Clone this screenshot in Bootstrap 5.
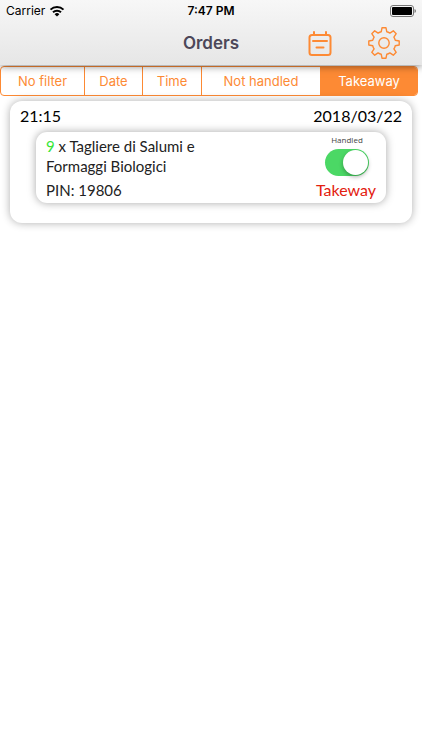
<!DOCTYPE html>
<html lang="en">
<head>
<meta charset="utf-8">
<meta name="viewport" content="width=device-width, initial-scale=1">
<title>Orders</title>
<link href="https://cdn.jsdelivr.net/npm/bootstrap@5.3.0/dist/css/bootstrap.min.css" rel="stylesheet">
<style>
  :root { --orange: #fd8a34; }
  body { font-family: Inter, "Liberation Sans", sans-serif; color: #000; background: #fff; }
  .topbar { background: linear-gradient(#f7f7f7, #e6e6e6); box-shadow: 0 1px 8px rgba(0,0,0,.5); z-index: 2; }
  .statusbar { height: 22px; font-size: 12px; line-height: 22px; padding: 0 6px; }
  .statusbar .clock { font-weight: 600; }
  .titlebar { height: 43px; padding: 0 21px; }
  .titlebar h1 { font-size: 17px; line-height: 43px; font-weight: 600; color: #4c4759; }
  .tool { color: var(--orange); line-height: 0; }
  .tools { gap: 34px; }
  .filters { margin: 1px 4px 0 0; display: grid; grid-template-columns: 83fr 58fr 59fr 119fr 97fr;
    height: 30px; border: 1px solid var(--orange); border-radius: 4px; overflow: hidden; }
  .filters label { --bs-btn-color: var(--orange); --bs-btn-hover-color: var(--orange);
    --bs-btn-active-bg: var(--orange); --bs-btn-active-color: #fff; --bs-btn-active-border-color: var(--orange);
    border: 0; border-radius: 0; padding: 0; font-size: 13px; line-height: 28px; white-space: nowrap; }
  .filters label + input + label { border-left: 1px solid var(--orange); }
  .order, .dish { border: 0; font-family: Lato, "Open Sans", sans-serif; color: #000; }
  .order { margin: 5px 10px 0; padding: 4px 10px 20px; border-radius: 12px; box-shadow: 0 0 8px rgba(0,0,0,.32); }
  .order-head { font-size: 16px; line-height: 22px; margin-bottom: 5px; }
  .dish { margin: 0 16px; padding: 4px 10px 3px; border-radius: 11px; box-shadow: 0 0 9px rgba(0,0,0,.35); color: #222; }
  .dish-name { font-size: 15px; line-height: 20px; max-width: 170px; }
  .qty { color: #37e637; }
  .pin { font-size: 15px; line-height: 20px; }
  .handled { font-family: "Open Sans", sans-serif; font-size: 8px; line-height: 8px; color: #444; width: 58px; }
  .form-check-input.toggle { width: 44px; height: 27px; margin: 5px 0 0; border: 0; border-radius: 14px;
    background: #ddd; display: block; }
  .form-check-input.toggle::before { content: ""; display: block; width: 25px; height: 25px; margin: 1px;
    border-radius: 50%; background: #fff; box-shadow: 0 2px 4px rgba(0,0,0,.3); }
  .form-check-input.toggle:checked { background: #4bd865; }
  .form-check-input.toggle:checked::before { margin-left: 18px; }
  .kind { font-size: 16px; line-height: 20px; color: #e3200f; }
</style>
</head>
<body class="min-vh-100">
<header class="topbar position-relative">
  <div class="statusbar row g-0">
    <div class="col d-flex align-items-center gap-1">
      <span>Carrier</span>
      <svg width="16" height="12" viewBox="0 0 16 12" fill="none" stroke="#000" stroke-width="2" aria-hidden="true">
        <path d="M1.5 4.6a9.3 9.3 0 0 1 13 0M4 7.3a5.7 5.7 0 0 1 8 0"/>
        <path d="M8 11.6 5.6 9.2a3.4 3.4 0 0 1 4.8 0z" fill="#000" stroke="none"/>
      </svg>
    </div>
    <div class="col-auto clock">7:47 PM</div>
    <div class="col d-flex align-items-center justify-content-end">
      <svg width="26" height="12" viewBox="0 0 26 12" aria-hidden="true">
        <rect x=".5" y=".5" width="23" height="11" rx="2.5" fill="#f6f6f6" stroke="#777"/>
        <rect x="2" y="2" width="20" height="8" rx="1" fill="#000"/>
        <path d="M24.5 4v4q1.500-.5 1.500-2t-1.500-2z" fill="#777"/>
      </svg>
    </div>
  </div>
  <div class="titlebar row g-0">
    <div class="col"></div>
    <h1 class="col-auto m-0">Orders</h1>
    <div class="tools col d-flex align-items-center justify-content-end">
      <button type="button" class="tool btn border-0 p-0" aria-label="Calendar">
        <svg width="26" height="26" viewBox="0 0 26 26" fill="none" stroke="currentColor" stroke-width="2" stroke-linecap="round">
          <rect x="2.500" y="4" width="21" height="20" rx="2.500"/>
          <path d="M7 1v3M19 1v3M6 10h14M9.500 16.500h7"/>
        </svg>
      </button>
      <button type="button" class="tool btn border-0 p-0" aria-label="Settings">
        <svg width="34" height="34" viewBox="-17 -16 34 34" fill="none" stroke="currentColor" stroke-width="1.400" stroke-linejoin="round">
          <circle r="5.200"/>
          <path d="M-2-15.200H2L2.800-11.200Q4.300-10.900 5.900-9.900L9.300-12.200 12.200-9.300 9.900-5.900Q10.900-4.300 11.200-2.800L15.200-2V2L11.200 2.800Q10.900 4.300 9.900 5.900L12.200 9.300 9.300 12.200 5.900 9.900Q4.300 10.900 2.800 11.200L2 15.200H-2L-2.800 11.200Q-4.300 10.900-5.900 9.900L-9.300 12.200-12.200 9.300-9.900 5.900Q-10.900 4.300-11.200 2.800L-15.200 2V-2L-11.200-2.800Q-10.900-4.300-9.900-5.900L-12.200-9.300-9.300-12.200-5.900-9.900Q-4.300-10.900-2.800-11.200Z"/>
        </svg>
      </button>
    </div>
  </div>
</header>

<main>
  <div class="filters" role="group" aria-label="Filter orders">
    <input type="radio" class="btn-check" name="filter" id="f-none"><label class="btn" for="f-none">No filter</label>
    <input type="radio" class="btn-check" name="filter" id="f-date"><label class="btn" for="f-date">Date</label>
    <input type="radio" class="btn-check" name="filter" id="f-time"><label class="btn" for="f-time">Time</label>
    <input type="radio" class="btn-check" name="filter" id="f-open"><label class="btn" for="f-open">Not handled</label>
    <input type="radio" class="btn-check" name="filter" id="f-take" checked><label class="btn" for="f-take">Takeaway</label>
  </div>

  <article class="order card">
    <div class="order-head d-flex justify-content-between">
      <span>21:15</span><span>2018/03/22</span>
    </div>
    <div class="dish card">
      <div class="d-flex justify-content-between">
        <div class="dish-name"><span class="qty">9</span> x Tagliere di Salumi e Formaggi Biologici</div>
        <div class="handled d-flex flex-column align-items-center">
          <label for="handled">Handled</label>
          <input class="form-check-input toggle" type="checkbox" role="switch" id="handled" checked>
        </div>
      </div>
      <div class="d-flex justify-content-between align-items-center mt-1">
        <span class="pin">PIN: 19806</span>
        <span class="kind">Takeway</span>
      </div>
    </div>
  </article>
</main>
<script src="https://cdn.jsdelivr.net/npm/bootstrap@5.3.0/dist/js/bootstrap.bundle.min.js"></script>
</body>
</html>
